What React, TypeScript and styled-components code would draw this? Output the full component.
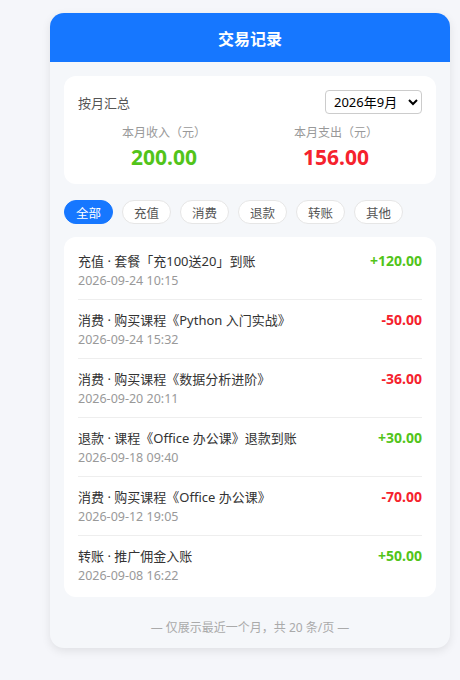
import React, { useState } from 'react'
import styled, { createGlobalStyle } from 'styled-components'

const GlobalStyle = createGlobalStyle`
    html, body {
        margin: 0;
        padding: 0;
        background: #f5f6fa;
        font-family: "Noto Sans", "Noto Sans CJK SC", sans-serif;
    }
`

const SPage = styled.div`
    padding: 13px 10px 30px 50px;
`
const SCard = styled.div`
    width: 400px;
    background: #f5f7fa;
    border-radius: 14px;
    overflow: hidden;
    box-shadow: 0 3px 10px rgba(0, 0, 0, 0.09);
`
const SHeader = styled.div`
    height: 49px;
    background: #1677ff;
    color: #fff;
    font-size: 16px;
    font-weight: 700;
    display: flex;
    align-items: center;
    justify-content: center;
`
const SBody = styled.div`
    padding: 14px 14px 0;
`
const SSummary = styled.div`
    background: #fff;
    border-radius: 12px;
    padding: 14px 14px 12px;
`
const SSummaryTop = styled.div`
    display: flex;
    align-items: center;
    justify-content: space-between;
    font-size: 13px;
    color: #555;
    height: 24px;
`
const SSelect = styled.select`
    width: 97px;
    height: 24px;
    font-size: 13px;
    font-family: inherit;
    color: #000;
    border: 1px solid #ccc;
    border-radius: 4px;
    background: #fff;
    padding: 0 2px 0 4px;
`
const SStats = styled.div`
    display: grid;
    grid-template-columns: 1fr 1fr;
    margin-top: 10px;
`
const SStat = styled.div`
    display: flex;
    flex-direction: column;
    align-items: center;
`
const SStatLabel = styled.div`
    font-size: 12px;
    color: #999;
    line-height: 18px;
`
const SStatValue = styled.div<{ $color: string }>`
    font-size: 21px;
    font-weight: 700;
    color: ${props => props.$color};
    line-height: 30px;
`
const SChips = styled.div`
    display: flex;
    gap: 9px;
    margin: 16px 0 13px;
`
const SChip = styled.button<{ $active?: boolean }>`
    height: 24px;
    width: 49px;
    border-radius: 12px;
    font-size: 12.5px;
    font-family: inherit;
    padding: 0;
    cursor: pointer;
    background: ${props => props.$active ? '#1677ff' : '#fff'};
    color: ${props => props.$active ? '#fff' : '#555'};
    border: 1px solid ${props => props.$active ? '#1677ff' : '#e6e6e6'};
`
const SList = styled.div`
    background: #fff;
    border-radius: 12px;
    padding: 4px 14px 3px;
`
const SItem = styled.div`
    display: flex;
    justify-content: space-between;
    padding: 9px 0 9px;
    border-bottom: 1px solid #eee;
    &:last-child {
        border-bottom: none;
    }
`
const STitle = styled.div`
    font-size: 13px;
    color: #333;
    line-height: 20px;
    margin-top: 1px;
`
const SDate = styled.div`
    font-size: 12.5px;
    color: #999;
    line-height: 18px;
    margin-top: 1px;
`
const SAmount = styled.div<{ $color: string }>`
    font-size: 14px;
    font-weight: 700;
    line-height: 20px;
    margin-top: 1px;
    color: ${props => props.$color};
`
const SFooter = styled.div`
    text-align: center;
    font-size: 12px;
    color: #aaa;
    line-height: 18px;
    padding: 22px 0 11px;
`

const GREEN = '#52c41a'
const RED = '#f5222d'

const records = [
    { title: '充值 · 套餐「充100送20」到账', date: '2026-09-24 10:15', amount: '+120.00', inc: true },
    { title: '消费 · 购买课程《Python 入门实战》', date: '2026-09-24 15:32', amount: '-50.00', inc: false },
    { title: '消费 · 购买课程《数据分析进阶》', date: '2026-09-20 20:11', amount: '-36.00', inc: false },
    { title: '退款 · 课程《Office 办公课》退款到账', date: '2026-09-18 09:40', amount: '+30.00', inc: true },
    { title: '消费 · 购买课程《Office 办公课》', date: '2026-09-12 19:05', amount: '-70.00', inc: false },
    { title: '转账 · 推广佣金入账', date: '2026-09-08 16:22', amount: '+50.00', inc: true },
]

const tabs = ['全部', '充值', '消费', '退款', '转账', '其他']

const App = () => {
    const [tab, setTab] = useState('全部')
    const [month, setMonth] = useState('2026-09')

    return (
        <SPage>
            <GlobalStyle />
            <SCard>
                <SHeader>交易记录</SHeader>
                <SBody>
                    <SSummary>
                        <SSummaryTop>
                            <span>按月汇总</span>
                            <SSelect value={month} onChange={(event) => setMonth(event.target.value)}>
                                <option value="2026-09">2026年9月</option>
                                <option value="2026-08">2026年8月</option>
                                <option value="2026-07">2026年7月</option>
                            </SSelect>
                        </SSummaryTop>
                        <SStats>
                            <SStat>
                                <SStatLabel>本月收入（元）</SStatLabel>
                                <SStatValue $color={GREEN}>200.00</SStatValue>
                            </SStat>
                            <SStat>
                                <SStatLabel>本月支出（元）</SStatLabel>
                                <SStatValue $color={RED}>156.00</SStatValue>
                            </SStat>
                        </SStats>
                    </SSummary>
                    <SChips>
                        {tabs.map(t => (
                            <SChip key={t} $active={t === tab} onClick={() => setTab(t)}>{t}</SChip>
                        ))}
                    </SChips>
                    <SList>
                        {records.map(r => (
                            <SItem key={r.title + r.date}>
                                <div>
                                    <STitle>{r.title}</STitle>
                                    <SDate>{r.date}</SDate>
                                </div>
                                <SAmount $color={r.inc ? GREEN : RED}>{r.amount}</SAmount>
                            </SItem>
                        ))}
                    </SList>
                </SBody>
                <SFooter>— 仅展示最近一个月，共 20 条/页 —</SFooter>
            </SCard>
        </SPage>
    )
}

export default App
